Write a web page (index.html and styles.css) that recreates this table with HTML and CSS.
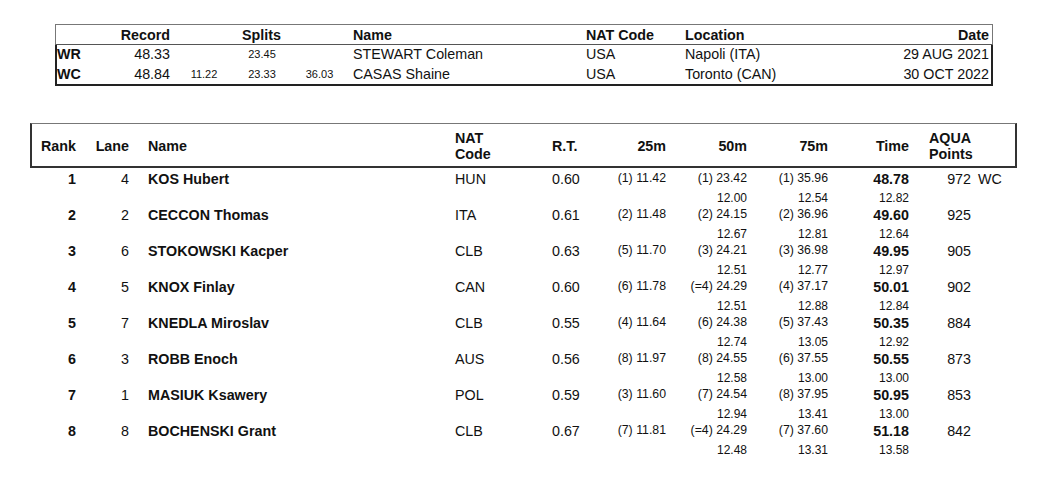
FILE: index.html
```html
<!DOCTYPE html>
<html>
<head>
<meta charset="utf-8">
<link rel="stylesheet" href="styles.css">
</head>
<body>
<div class="page">
  <div class="records">
    <div class="rec-head rec-grid">
      <div></div>
      <div class="r b">Record</div>
      <div class="c b splits-h">Splits</div>
      <div class="b">Name</div>
      <div class="b">NAT Code</div>
      <div class="b">Location</div>
      <div class="r b">Date</div>
    </div>
    <div class="rec-body">
      <div class="rec-grid rec-row">
        <div class="b lbl">WR</div>
        <div class="r">48.33</div>
        <div class="c sm"></div>
        <div class="c sm">23.45</div>
        <div class="c sm"></div>
        <div>STEWART Coleman</div>
        <div>USA</div>
        <div>Napoli (ITA)</div>
        <div class="r">29 AUG 2021</div>
      </div>
      <div class="rec-grid rec-row">
        <div class="b lbl">WC</div>
        <div class="r">48.84</div>
        <div class="c sm">11.22</div>
        <div class="c sm">23.33</div>
        <div class="c sm">36.03</div>
        <div>CASAS Shaine</div>
        <div>USA</div>
        <div>Toronto (CAN)</div>
        <div class="r">30 OCT 2022</div>
      </div>
    </div>
  </div>

  <div class="results">
    <div class="res-head res-grid">
      <div class="r b">Rank</div>
      <div class="r b">Lane</div>
      <div class="b name">Name</div>
      <div class="b two">NAT<br>Code</div>
      <div class="b">R.T.</div>
      <div class="r b">25m</div>
      <div class="r b">50m</div>
      <div class="r b">75m</div>
      <div class="r b">Time</div>
      <div class="b two pts">AQUA<br>Points</div>
      <div></div>
    </div>
    <div class="res-body">
      <!-- 1 -->
      <div class="res-grid main">
        <div class="r b">1</div><div class="r">4</div><div class="b name">KOS Hubert</div><div>HUN</div><div>0.60</div>
        <div class="r sm">(1) 11.42</div><div class="r sm">(1) 23.42</div><div class="r sm">(1) 35.96</div><div class="r b">48.78</div><div class="r">972</div><div class="note">WC</div>
      </div>
      <div class="res-grid sub">
        <div></div><div></div><div></div><div></div><div></div><div></div><div class="r">12.00</div><div class="r">12.54</div><div class="r">12.82</div><div></div><div></div>
      </div>
      <!-- 2 -->
      <div class="res-grid main">
        <div class="r b">2</div><div class="r">2</div><div class="b name">CECCON Thomas</div><div>ITA</div><div>0.61</div>
        <div class="r sm">(2) 11.48</div><div class="r sm">(2) 24.15</div><div class="r sm">(2) 36.96</div><div class="r b">49.60</div><div class="r">925</div><div></div>
      </div>
      <div class="res-grid sub">
        <div></div><div></div><div></div><div></div><div></div><div></div><div class="r">12.67</div><div class="r">12.81</div><div class="r">12.64</div><div></div><div></div>
      </div>
      <!-- 3 -->
      <div class="res-grid main">
        <div class="r b">3</div><div class="r">6</div><div class="b name">STOKOWSKI Kacper</div><div>CLB</div><div>0.63</div>
        <div class="r sm">(5) 11.70</div><div class="r sm">(3) 24.21</div><div class="r sm">(3) 36.98</div><div class="r b">49.95</div><div class="r">905</div><div></div>
      </div>
      <div class="res-grid sub">
        <div></div><div></div><div></div><div></div><div></div><div></div><div class="r">12.51</div><div class="r">12.77</div><div class="r">12.97</div><div></div><div></div>
      </div>
      <!-- 4 -->
      <div class="res-grid main">
        <div class="r b">4</div><div class="r">5</div><div class="b name">KNOX Finlay</div><div>CAN</div><div>0.60</div>
        <div class="r sm">(6) 11.78</div><div class="r sm">(=4) 24.29</div><div class="r sm">(4) 37.17</div><div class="r b">50.01</div><div class="r">902</div><div></div>
      </div>
      <div class="res-grid sub">
        <div></div><div></div><div></div><div></div><div></div><div></div><div class="r">12.51</div><div class="r">12.88</div><div class="r">12.84</div><div></div><div></div>
      </div>
      <!-- 5 -->
      <div class="res-grid main">
        <div class="r b">5</div><div class="r">7</div><div class="b name">KNEDLA Miroslav</div><div>CLB</div><div>0.55</div>
        <div class="r sm">(4) 11.64</div><div class="r sm">(6) 24.38</div><div class="r sm">(5) 37.43</div><div class="r b">50.35</div><div class="r">884</div><div></div>
      </div>
      <div class="res-grid sub">
        <div></div><div></div><div></div><div></div><div></div><div></div><div class="r">12.74</div><div class="r">13.05</div><div class="r">12.92</div><div></div><div></div>
      </div>
      <!-- 6 -->
      <div class="res-grid main">
        <div class="r b">6</div><div class="r">3</div><div class="b name">ROBB Enoch</div><div>AUS</div><div>0.56</div>
        <div class="r sm">(8) 11.97</div><div class="r sm">(8) 24.55</div><div class="r sm">(6) 37.55</div><div class="r b">50.55</div><div class="r">873</div><div></div>
      </div>
      <div class="res-grid sub">
        <div></div><div></div><div></div><div></div><div></div><div></div><div class="r">12.58</div><div class="r">13.00</div><div class="r">13.00</div><div></div><div></div>
      </div>
      <!-- 7 -->
      <div class="res-grid main">
        <div class="r b">7</div><div class="r">1</div><div class="b name">MASIUK Ksawery</div><div>POL</div><div>0.59</div>
        <div class="r sm">(3) 11.60</div><div class="r sm">(7) 24.54</div><div class="r sm">(8) 37.95</div><div class="r b">50.95</div><div class="r">853</div><div></div>
      </div>
      <div class="res-grid sub">
        <div></div><div></div><div></div><div></div><div></div><div></div><div class="r">12.94</div><div class="r">13.41</div><div class="r">13.00</div><div></div><div></div>
      </div>
      <!-- 8 -->
      <div class="res-grid main">
        <div class="r b">8</div><div class="r">8</div><div class="b name">BOCHENSKI Grant</div><div>CLB</div><div>0.67</div>
        <div class="r sm">(7) 11.81</div><div class="r sm">(=4) 24.29</div><div class="r sm">(7) 37.60</div><div class="r b">51.18</div><div class="r">842</div><div></div>
      </div>
      <div class="res-grid sub">
        <div></div><div></div><div></div><div></div><div></div><div></div><div class="r">12.48</div><div class="r">13.31</div><div class="r">13.58</div><div></div><div></div>
      </div>
    </div>
  </div>
</div>
</body>
</html>
```
FILE: styles.css
```css
html, body {
  margin: 0;
  padding: 0;
  background: #fff;
}
body {
  font-family: "Liberation Sans", Arial, sans-serif;
  font-size: 14.3px;
  color: #111;
  width: 1046px;
  height: 480px;
  overflow: hidden;
}
.page {
  padding-top: 24px;
}
.b { font-weight: bold; }
.r { text-align: right; }
.c { text-align: center; }
.sm { font-size: 11px; }

/* Records box */
.records {
  margin-left: 55px;
  width: 938px;
}
.rec-grid {
  display: grid;
  grid-template-columns: 60px 54px 68px 48px 67px 233px 99px 171px 133px;
  align-items: center;
}
.rec-head {
  height: 19px;
  border: 1px solid #777;
  border-bottom: 1px solid #555;
  box-sizing: content-box;
  width: 936px;
}
.rec-head .splits-h {
  grid-column: 3 / span 3;
}
.rec-body {
  border: 2px solid #222;
  border-top: none;
  width: 934px;
}
.rec-row {
  height: 19.5px;
  line-height: 19px;
  margin-left: -1px;
}
.rec-row .lbl {
  padding-left: 1px;
}

/* Results */
.results {
  margin-top: 37px;
  margin-left: 30px;
  width: 987px;
}
.res-grid {
  display: grid;
  grid-template-columns: 44px 53px 326px 97px 48px 66px 81px 81px 81px 62px 44px;
  align-items: center;
}
.res-head {
  border-top: 1px solid #777;
  border-left: 2px solid #333;
  border-right: 2px solid #333;
  border-bottom: 2px solid #333;
  padding-top: 1px;
  box-sizing: border-box;
  height: 45px;
  line-height: 16px;
}
.res-head .pts { text-align: left; padding-left: 20px; }
.name { padding-left: 19px; }
.res-body {
  margin-top: 3px;
  border-left: 2px solid transparent;
}
.main {
  height: 17px;
  line-height: 17px;
}
.main .sm {
  font-size: 12.3px;
  line-height: 14px;
  align-self: start;
}
.sub {
  height: 19px;
  line-height: 18px;
  font-size: 12px;
}
.note { padding-left: 7px; }
```
